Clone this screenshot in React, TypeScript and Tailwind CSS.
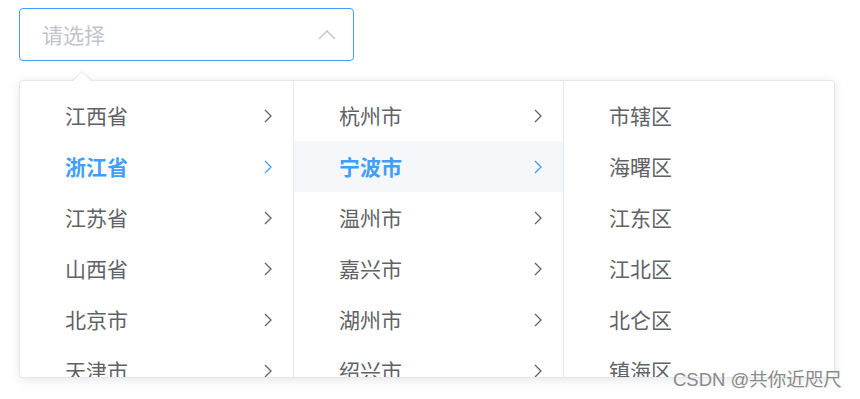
import React from "react";

const provinces = ["江西省", "浙江省", "江苏省", "山西省", "北京市", "天津市"];
const cities = ["杭州市", "宁波市", "温州市", "嘉兴市", "湖州市", "绍兴市"];
const districts = ["市辖区", "海曙区", "江东区", "江北区", "北仑区", "镇海区"];

function Chevron({ className }: { className?: string }) {
  return (
    <svg width="8" height="14" viewBox="0 0 8 14" fill="none" className={className}>
      <path d="M1 1l6 6-6 6" stroke="currentColor" strokeWidth="1.3" />
    </svg>
  );
}

function Column({
  items,
  active,
  activeBg,
  arrow,
  className,
}: {
  items: string[];
  active?: number;
  activeBg?: boolean;
  arrow?: boolean;
  className?: string;
}) {
  return (
    <div className={`border-r border-[#e4e7ed] pt-[9px] last:border-r-0 ${className ?? ""}`}>
      {items.map((it, i) => {
        const on = i === active;
        return (
          <div
            key={it}
            className={`flex h-[51px] items-center justify-between pl-[45px] pr-[21px] ${
              on ? "font-bold text-[#409eff]" : "text-[#606266]"
            } ${on && activeBg ? "bg-[#f5f7fa]" : ""}`}
          >
            <span>{it}</span>
            {arrow && <Chevron />}
          </div>
        );
      })}
    </div>
  );
}

export default function App() {
  return (
    <div
      className="relative h-[399px] w-[860px] overflow-hidden bg-white text-[21px]"
      style={{ fontFamily: '"Noto Sans CJK SC", "Noto Sans", sans-serif' }}
    >
      <div className="ml-[19px] mt-[8px] flex h-[53px] w-[335px] items-center justify-between rounded-[4px] border border-[#409eff] pl-[22px] pr-[17px]">
        <span className="text-[#c0c4cc]">请选择</span>
        <svg width="18" height="10" viewBox="0 0 18 10" fill="none" className="text-[#c0c4cc]">
          <path d="M1 9l8-8 8 8" stroke="currentColor" strokeWidth="1.4" />
        </svg>
      </div>

      <div className="relative ml-[19px] mt-[19px] w-[816px]">
        <div className="absolute -top-[9px] left-[53px] z-10 h-0 w-0 border-x-[10px] border-b-[9px] border-x-transparent border-b-[#e4e7ed]" />
        <div className="absolute -top-[8px] left-[54px] z-10 h-0 w-0 border-x-[9px] border-b-[9px] border-x-transparent border-b-white" />
        <div className="flex h-[298px] overflow-hidden rounded-[4px] border border-[#e4e7ed] bg-white shadow-[0_2px_12px_rgba(0,0,0,0.1)]">
          <Column items={provinces} active={1} arrow className="w-[274px]" />
          <Column items={cities} active={1} activeBg arrow className="w-[270px]" />
          <Column items={districts} className="flex-1" />
        </div>
      </div>

      <div
        className="absolute left-[673px] top-[366px] text-[18.5px] text-[#8a8a8a]"
        style={{ fontFamily: '"Liberation Sans", "Noto Sans CJK SC", sans-serif' }}
      >
        CSDN @共你近咫尺
      </div>
    </div>
  );
}
